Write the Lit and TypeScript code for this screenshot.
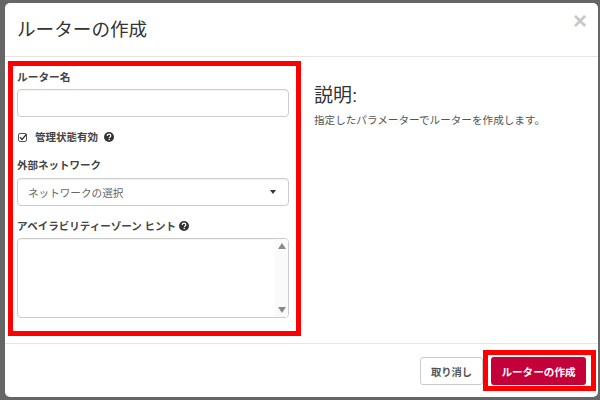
import { LitElement, html, css } from "lit";
import { customElement } from "lit/decorators.js";

@customElement("app-root")
export class AppRoot extends LitElement {
  static styles = css`
    :host { display: block; width: 600px; height: 400px; box-sizing: border-box; padding: 3px 2px 3px 5px; background: #666; font-family: "Helvetica Neue", "Liberation Sans", "Noto Sans CJK JP", sans-serif; color: #333; overflow: hidden; }
    * { box-sizing: border-box; }
    .modal { position: relative; width: 593px; height: 394px; background: #fff; border-radius: 5px; display: flex; flex-direction: column; }
    .header { height: 54px; flex: none; border-bottom: 1px solid #e5e5e5; padding: 0 12px; display: flex; justify-content: space-between; }
    h1 { margin: 15px 0 0; font-size: 18.6px; line-height: 24px; font-weight: 400; color: #333; }
    .close { font-size: 24px; line-height: 24px; font-weight: 700; color: #c8c8c8; margin-top: 6px; margin-right: -1px; font-family: "Liberation Sans", sans-serif; }
    .body { flex: 1; display: flex; padding: 13px 12px 0; }
    .left { width: 272px; flex: none; display: flex; flex-direction: column; }
    .right { margin-left: 25px; padding-top: 13px; }
    h2 { margin: 0; font-size: 19px; line-height: 26px; font-weight: 400; color: #333; }
    .right p { margin: 4px 0 0; font-size: 10.6px; line-height: 14px; color: #555; white-space: nowrap; }
    label, .label { font-size: 10.5px; line-height: 14px; font-weight: 700; color: #444; display: flex; align-items: center; white-space: nowrap; }
    .name { font-size: 10.7px; }
    .field { width: 272px; border: 1px solid #ccc; border-radius: 4px; background: #fff; box-shadow: inset 0 1px 1px rgba(0,0,0,.05); margin-top: 5px; }
    .input { height: 28px; }
    .check { margin-top: 13px; height: 14px; padding-left: 1px; }
    .box { width: 9px; height: 9px; display: block; margin-right: 8px; }
    .q { width: 10px; height: 10px; display: block; margin-left: 6px; }
    .q.near { margin-left: 3px; }
    .ext { margin-top: 14px; }
    .ext + .field { margin-top: 6px; }
    .select { height: 28px; display: flex; align-items: center; justify-content: space-between; padding: 0 10px; font-size: 10.6px; color: #666; }
    .caret { width: 0; height: 0; border-left: 3.5px solid transparent; border-right: 3.5px solid transparent; border-top: 4px solid #333; margin-right: 2px; }
    .az { margin-top: 13px; }
    .area { height: 80px; display: flex; justify-content: flex-end; overflow: hidden; }
    .bar { width: 13px; background: #fafafa; display: flex; flex-direction: column; justify-content: space-between; align-items: center; padding: 4px 0; }
    .up { width: 0; height: 0; border-left: 4px solid transparent; border-right: 4px solid transparent; border-bottom: 6px solid #8a8a8a; }
    .down { width: 0; height: 0; border-left: 4px solid transparent; border-right: 4px solid transparent; border-top: 6px solid #8a8a8a; }
    .footer { height: 54px; flex: none; border-top: 1px solid #e5e5e5; display: flex; justify-content: flex-end; gap: 8px; padding: 13px 12px 0 0; }
    .btn { height: 28px; border-radius: 3px; font-size: 10.3px; font-weight: 700; display: flex; align-items: center; justify-content: center; white-space: nowrap; }
    .cancel { width: 63px; border: 1px solid #ccc; background: #fff; color: #555; }
    .ok { width: 95px; background: #c4003a; color: #fff; font-size: 10.6px; }
    .mark { position: absolute; border: 5px solid #f00; pointer-events: none; }
    .m1 { left: 3px; top: 58px; width: 293px; height: 275px; }
    .m2 { left: 478px; top: 347px; width: 113px; height: 41px; }
  `;

  private q(near = false) {
    return html`<svg class="q ${near ? "near" : ""}" viewBox="0 0 10 10"><circle cx="5" cy="5" r="5" fill="#333"/><path d="M3.2 3.9C3.3 2.8 4 2.2 5 2.2s1.8.6 1.8 1.5c0 1.3-1.4 1.2-1.4 2.4" fill="none" stroke="#fff" stroke-width="1.2"/><rect x="4.6" y="6.8" width="1.3" height="1.3" fill="#fff"/></svg>`;
  }

  render() {
    return html`
      <div class="modal">
        <div class="header">
          <h1>ルーターの作成</h1>
          <span class="close">×</span>
        </div>
        <div class="body">
          <div class="left">
            <label class="name">ルーター名</label>
            <div class="field input"></div>
            <div class="label check">
              <svg class="box" viewBox="0 0 9 9"><rect x=".5" y=".5" width="8" height="8" rx="1.5" fill="#fff" stroke="#555"/><path d="M2 4.2l2 2.2L8.5 1.2" fill="none" stroke="#333" stroke-width="1.3"/></svg>
              管理状態有効 ${this.q()}
            </div>
            <label class="ext">外部ネットワーク</label>
            <div class="field select"><span>ネットワークの選択</span><span class="caret"></span></div>
            <label class="az">アベイラビリティーゾーン ヒント ${this.q(true)}</label>
            <div class="field area"><div class="bar"><span class="up"></span><span class="down"></span></div></div>
          </div>
          <div class="right">
            <h2>説明:</h2>
            <p>指定したパラメーターでルーターを作成します。</p>
          </div>
        </div>
        <div class="footer">
          <div class="btn cancel">取り消し</div>
          <div class="btn ok">ルーターの作成</div>
        </div>
        <div class="mark m1"></div>
        <div class="mark m2"></div>
      </div>
    `;
  }
}
